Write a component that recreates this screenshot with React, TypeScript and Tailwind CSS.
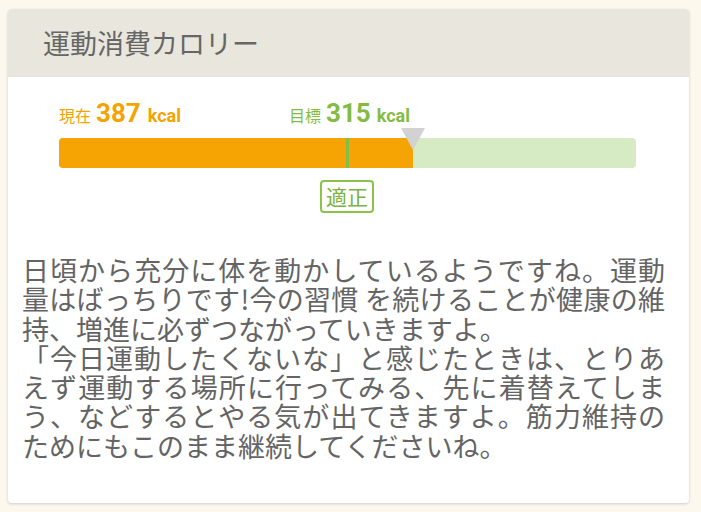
import React from "react";

const cjk = { fontFamily: '"Noto Sans CJK JP", "Noto Sans", sans-serif' };
const num = { fontFamily: 'Roboto, "Noto Sans CJK JP", sans-serif' };

export default function App() {
  const barWidth = 577;
  const current = 387;
  const target = 315;
  const max = 631;
  const curW = Math.round((current / max) * barWidth);
  const tgtX = Math.round((target / max) * barWidth);

  return (
    <div className="min-h-[512px] w-[701px] bg-[#fcf8ee] pt-[9px] pl-[8px]" style={cjk}>
      <div className="w-[681px] overflow-hidden rounded-[4px] bg-white shadow-[0_1px_3px_rgba(0,0,0,0.18)]">
        <div className="flex h-[68px] items-center bg-[#e8e6dd] pl-[35px]">
          <h1 className="text-[27px] font-normal text-[#666666]">運動消費カロリー</h1>
        </div>

        <div className="pt-[23px] pl-[51px]">
          <div className="flex items-baseline leading-none">
            <div className="flex w-[230px] items-baseline text-[#f5a300]">
              <span className="text-[16px]">現在</span>
              <span className="ml-[5px] text-[26px] font-bold" style={num}>387</span>
              <span className="ml-[7px] text-[18px] font-bold" style={num}>kcal</span>
            </div>
            <div className="flex items-baseline text-[#84bb42]">
              <span className="text-[16px]">目標</span>
              <span className="ml-[5px] text-[26px] font-bold" style={num}>315</span>
              <span className="ml-[6px] text-[18px] font-bold" style={num}>kcal</span>
            </div>
          </div>

          <div className="relative mt-[12px] h-[30px] w-[577px] rounded-[4px] bg-[#d6eac4]">
            <div className="h-full rounded-l-[4px] bg-[#f6a404]" style={{ width: curW }} />
            <div className="absolute top-0 h-full w-[3px] bg-[#86bd45]" style={{ left: tgtX - 1 }} />
            <svg
              className="absolute top-[-10px]"
              style={{ left: curW - 12 }}
              width="24"
              height="22"
              viewBox="0 0 24 22"
            >
              <polygon points="0,0 24,0 12,22" fill="#d2d2d2" />
            </svg>
          </div>

          <div className="mt-[12px] flex" style={{ paddingLeft: tgtX - 27 }}>
            <span className="flex h-[33px] w-[54px] items-center justify-center rounded-[4px] border-2 border-[#8bc34a] text-[21px] leading-none text-[#7cb342]">
              適正
            </span>
          </div>
        </div>

        <p className="pt-[42px] pb-[43px] pl-[14px] pr-[24px] text-justify text-[27px] leading-[29.3px] text-[#646464]">
          日頃から充分に体を動かしているようですね。運動量はばっちりです!今の習慣 を続けることが健康の維持、増進に必ずつながっていきますよ。
          <br />
          「今日運動したくないな」と感じたときは、とりあえず運動する場所に行ってみる、先に着替えてしまう、などするとやる気が出てきますよ。筋力維持のためにもこのまま継続してくださいね。
        </p>
      </div>
    </div>
  );
}
